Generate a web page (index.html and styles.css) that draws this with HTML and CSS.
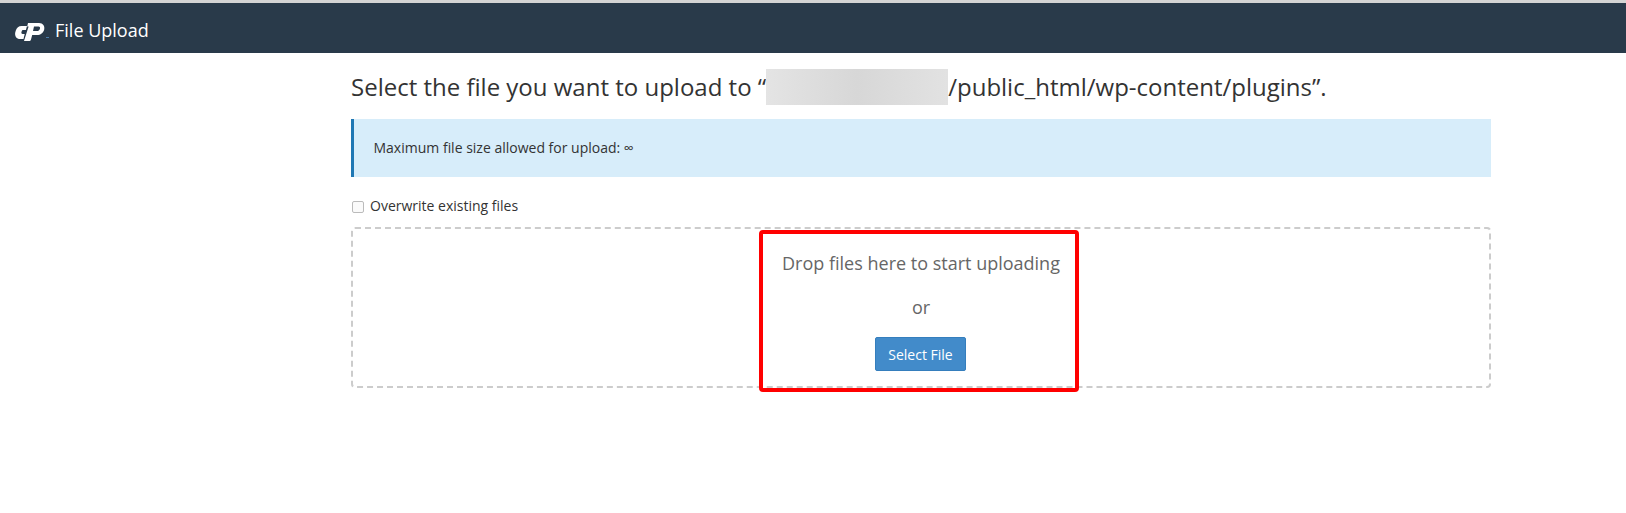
FILE: index.html
```html
<!DOCTYPE html>
<html lang="en">
<head>
<meta charset="utf-8">
<title>File Upload</title>
<link rel="stylesheet" href="styles.css">
</head>
<body>
<header class="topbar">
  <svg class="logo" viewBox="0 0 34 20" width="34" height="20" aria-hidden="true">
    <path fill="#fff" d="M6.500 4H12L10.900 8H8.300C7.500 8 6.900 8.400 6.700 9.200L6.400 10.500C6.200 11.300 6.700 12 7.500 12H9.700L8.500 17H5.200C1.700 17-.6 14 .3 10.300L.8 8.600C1.500 5.800 3.800 4 6.500 4Z"/>
    <path fill="#fff" fill-rule="evenodd" d="M13 1H24C28 1 30 4 29.200 7.500 28.400 11 25.600 13 22 13H17.200L16 17.500C15.700 18.500 15 19 14 19H9L13.600 4.500H12.200ZM19 4.600H23.500C24.700 4.600 25.200 5.400 25 6.400 24.700 7.800 23.600 9 22 9H18Z"/>
    <path fill="#5b9bd5" d="M31 15h3v.7h-3z"/>
  </svg>
  <span class="topbar-title">File Upload</span>
</header>
<main class="content">
  <h1 class="heading">Select the file you want to upload to “<span class="blur"></span>/public_html/wp-content/plugins”.</h1>
  <div class="alert">Maximum file size allowed for upload: ∞</div>
  <label class="overwrite"><input type="checkbox" class="check"><span>Overwrite existing files</span></label>
  <section class="dropzone">
    <p class="drop-text">Drop files here to start uploading</p>
    <p class="drop-or">or</p>
    <button class="select-btn" type="button">Select File</button>
    <div class="highlight"></div>
  </section>
</main>
</body>
</html>
```

FILE: styles.css
```css
* { box-sizing: border-box; }
html, body { margin: 0; padding: 0; background: #fff; }
body { font-family: "Open Sans", sans-serif; color: #333; height: 513px; overflow: hidden; }

.topbar {
  height: 53px;
  border-top: 3px solid #d4d4d4;
  background: #293a4a;
  display: flex;
  align-items: center;
  padding-left: 15px;
  gap: 6px;
}
.logo { display: block; margin-top: 8px; }
.topbar-title { color: #fff; font-size: 18px; line-height: 24px; margin-top: 4px; }

.content { width: 1140px; margin-left: 351px; }

.heading {
  margin: 0;
  height: 66px;
  padding-top: 16px;
  font-size: 24px;
  line-height: 36px;
  font-weight: 400;
  color: #333;
  white-space: nowrap;
}
.blur {
  display: inline-block;
  width: 182px;
  height: 36px;
  vertical-align: top;
  background: linear-gradient(90deg, #e4e4e4, #d7d7d7 50%, #e2e2e2);
}

.alert {
  height: 58px;
  border-left: 3px solid #1f78b4;
  background: #d7edfa;
  padding-left: 19.5px;
  font-size: 14px;
  line-height: 58px;
  color: #333;
}

.overwrite {
  display: flex;
  align-items: center;
  height: 50px;
  padding-top: 6px;
  font-size: 14px;
  color: #333;
}
.check {
  appearance: none;
  margin: 4px 6px 0 1px;
  width: 12px;
  height: 12px;
  background: #fafafa;
  border: 1px solid #bbb;
  border-radius: 2px;
}

.dropzone {
  position: relative;
  height: 161px;
  border: 2px dashed #ccc;
  border-radius: 4px;
  text-align: center;
  color: #666;
  padding-top: 21px;
}
.drop-text, .drop-or { margin: 0; font-size: 18px; line-height: 26px; }
.drop-or { margin-top: 18px; }
.select-btn {
  display: block;
  margin: 17px 0 0 522px;
  width: 91px;
  height: 34px;
  background: #428bca;
  border: 1px solid #357ebd;
  border-radius: 2px;
  color: #fff;
  font-family: inherit;
  font-size: 14px;
}
.highlight {
  position: absolute;
  left: 406px;
  top: 1px;
  width: 320px;
  height: 162px;
  border: 4px solid #f00;
  border-radius: 4px;
}
```
